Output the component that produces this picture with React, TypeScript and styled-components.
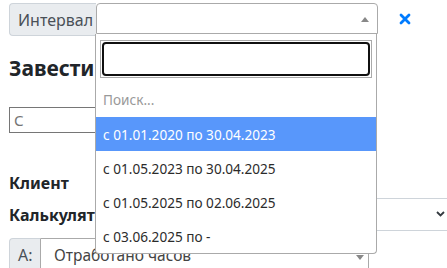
import React from "react";
import styled, { createGlobalStyle } from "styled-components";

const GlobalStyle = createGlobalStyle`
  html, body {
    margin: 0;
    padding: 0;
    background: #ffffff;
    overflow: hidden;
  }
  body {
    font-family: "Noto Sans", "Open Sans", sans-serif;
    color: #212529;
  }
`;

// page
const Page = styled.div`
  position: relative;
  width: 447px;
  height: 268px;
  padding: 3px 0 0 9px;
  box-sizing: border-box;
  overflow: hidden;
`;

const TopRow = styled.div`
  display: flex;
  align-items: flex-start;
`;

const Addon = styled.div<{ $w: number; $h: number }>`
  display: flex;
  align-items: center;
  flex: 0 0 auto;
  box-sizing: border-box;
  width: ${(p) => p.$w}px;
  height: ${(p) => p.$h}px;
  padding-left: 8px;
  background: #e9ecef;
  border: 1px solid #ced4da;
  border-right: none;
  border-radius: 4px 0 0 4px;
  color: #495057;
  font-size: 16px;
`;

const Select2 = styled.div<{ $open?: boolean; $w: number; $h: number }>`
  position: relative;
  display: flex;
  align-items: center;
  flex: 0 0 auto;
  box-sizing: border-box;
  width: ${(p) => p.$w}px;
  height: ${(p) => p.$h}px;
  padding-left: 13px;
  border: 1px solid #aaa;
  border-radius: ${(p) => (p.$open ? "4px 4px 0 0" : "0 4px 4px 0")};
  background: #fff;
  color: #444;
  font-size: 15.5px;
`;

const Arrow = styled.span<{ $up?: boolean; $right: number; $top: number }>`
  position: absolute;
  right: ${(p) => p.$right}px;
  top: ${(p) => p.$top}px;
  width: 0;
  height: 0;
  border-left: 4px solid transparent;
  border-right: 4px solid transparent;
  ${(p) =>
    p.$up
      ? "border-bottom: 5px solid #888;"
      : "border-top: 5px solid #888;"}
`;

const ClearButton = styled.button`
  display: flex;
  align-items: center;
  justify-content: center;
  flex: 0 0 auto;
  margin: 9px 0 0 20px;
  padding: 0;
  width: 14px;
  height: 14px;
  border: none;
  background: none;
`;

const Heading = styled.h4`
  margin: 17px 0 0;
  font-size: 21px;
  font-weight: 700;
  line-height: 30px;
  color: #212529;
  white-space: nowrap;
`;

const PlainInput = styled.input`
  display: block;
  margin-top: 24px;
  box-sizing: border-box;
  width: 170px;
  height: 26px;
  padding: 0 4px;
  border: 1px solid #767676;
  font-family: inherit;
  font-size: 15px;
  &::placeholder {
    color: #757575;
  }
`;

const FieldLabel = styled.div`
  font-size: 16px;
  font-weight: 700;
  line-height: 24px;
  white-space: nowrap;
`;

const ClientLabel = styled(FieldLabel)`
  margin-top: 38px;
`;

const CalcRow = styled.div`
  display: flex;
  align-items: center;
  height: 33px;
  margin-top: 3px;
`;

const CalcLabel = styled(FieldLabel)`
  flex: 0 0 160px;
`;

const CustomSelect = styled.div`
  position: relative;
  box-sizing: border-box;
  flex: 0 0 auto;
  width: 360px;
  height: 33px;
  border: 1px solid #ced4da;
  border-radius: 4px;
`;

const Chevron = styled.svg`
  position: absolute;
  left: 266px;
  top: 12px;
`;

const BottomRow = styled.div`
  display: flex;
  margin-top: 7px;
`;

// dropdown over the page
const Dropdown = styled.div`
  position: absolute;
  left: 95px;
  top: 34px;
  z-index: 10;
  box-sizing: border-box;
  width: 282px;
  background: #fff;
  border: 1px solid #aaa;
  border-top: none;
  border-radius: 0 0 4px 4px;
`;

const SearchWrap = styled.div`
  padding: 6px 4px 4px 4px;
`;

const SearchBox = styled.div`
  box-sizing: border-box;
  height: 38px;
  padding: 1px;
  border: 1px solid #aaa;
`;

const SearchInput = styled.input`
  display: block;
  box-sizing: border-box;
  width: 100%;
  height: 100%;
  border: 2px solid #101010;
  border-radius: 4px;
  outline: none;
  background: #fff;
`;

const Option = styled.div<{ $active?: boolean; $muted?: boolean; $h?: number }>`
  display: flex;
  align-items: center;
  height: ${(p) => p.$h ?? 34}px;
  padding-left: 7px;
  font-size: 13.6px;
  background: ${(p) => (p.$active ? "#5897fb" : "transparent")};
  color: ${(p) => (p.$active ? "#ffffff" : p.$muted ? "#999999" : "#2b2b2b")};
`;

const intervals = [
  "с 01.01.2020 по 30.04.2023",
  "с 01.05.2023 по 30.04.2025",
  "с 01.05.2025 по 02.06.2025",
  "с 03.06.2025 по -",
];

export default function App() {
  return (
    <Page>
      <GlobalStyle />
      <TopRow>
        <Addon $w={87} $h={33}>Интервал</Addon>
        <Select2 $open $w={282} $h={31}>
          <Arrow $up $right={8} $top={13} />
        </Select2>
        <ClearButton aria-label="Очистить">
          <svg width="12" height="12" viewBox="0 0 12 12">
            <path
              d="M2 2 L10 10 M10 2 L2 10"
              stroke="#007bff"
              strokeWidth="2.8"
              strokeLinecap="round"
            />
          </svg>
        </ClearButton>
      </TopRow>

      <Heading>Завести тариф</Heading>
      <PlainInput placeholder="С" />
      <ClientLabel>Клиент</ClientLabel>
      <CalcRow>
        <CalcLabel>Калькулятор</CalcLabel>
        <CustomSelect>
          <Chevron width="9" height="6" viewBox="0 0 9 6">
            <path
              d="M1 1 L4.5 4.5 L8 1"
              fill="none"
              stroke="#343a40"
              strokeWidth="1.8"
            />
          </Chevron>
        </CustomSelect>
      </CalcRow>
      <BottomRow>
        <Addon $w={31} $h={34}>А:</Addon>
        <Select2 $w={329} $h={34}>
          Отработано часов
          <Arrow $right={4} $top={16} />
        </Select2>
      </BottomRow>

      <Dropdown>
        <SearchWrap>
          <SearchBox>
            <SearchInput />
          </SearchBox>
        </SearchWrap>
        <Option $muted $h={35}>
          Поиск...
        </Option>
        {intervals.map((item, i) => (
          <Option key={item} $active={i === 0}>
            {item}
          </Option>
        ))}
      </Dropdown>
    </Page>
  );
}
